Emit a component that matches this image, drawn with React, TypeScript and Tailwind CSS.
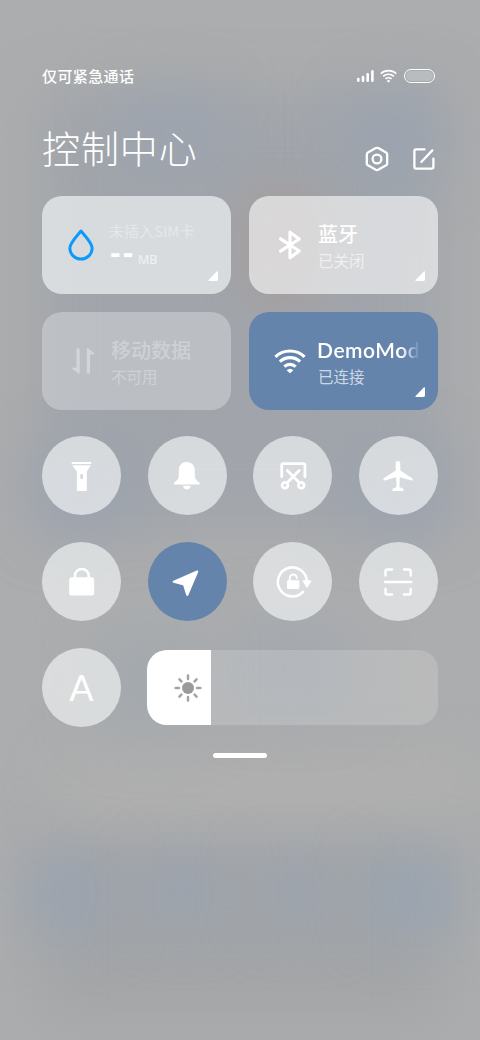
import type { ReactNode } from "react";

const tiles = [
  { id: "torch", icon: <TorchIcon /> },
  { id: "bell", icon: <BellIcon /> },
  { id: "screenshot", icon: <ScreenshotIcon /> },
  { id: "airplane", icon: <AirplaneIcon /> },
  { id: "lock", icon: <LockIcon /> },
  { id: "location", icon: <LocationIcon />, active: true },
  { id: "rotation", icon: <RotationIcon /> },
  { id: "scan", icon: <ScanIcon /> },
];

// All round toggles share the same 40px canvas
function Glyph({ children }: { children: ReactNode }) {
  return (
    <svg viewBox="0 0 40 40" className="h-10 w-10 overflow-visible" fill="none" strokeLinecap="round" strokeLinejoin="round">
      {children}
    </svg>
  );
}

function TorchIcon() {
  return (
    <Glyph>
      <rect x="9.5" y="6" width="20" height="2" rx="0.9" fill="#fff" />
      <path d="M10.2 9.2H28.8L24.8 15.6V34Q24.8 35 23.8 35H15.8Q14.8 35 14.8 34V15.6Z" fill="#fff" />
      <rect x="18.4" y="18" width="2.6" height="5" rx="1.2" fill="#d3d6da" />
    </Glyph>
  );
}

function BellIcon() {
  return (
    <Glyph>
      <path d="M19.6 6C15.1 6 11.8 9.3 11.8 14V19.5C11.8 22.5 10.4 24.2 7.4 26.4C6.3 27.3 6.6 28.4 7.8 28.4H31.8C33 28.4 33.3 27.3 32.2 26.4C29.2 24.2 27.8 22.5 27.8 19.5V14C27.8 9.3 24.3 6 19.6 6Z" fill="#fff" />
      <path d="M15.9 29.8H23.9C23.3 32.2 21.9 33.6 19.9 33.6S16.5 32.2 15.9 29.8Z" fill="#fff" />
    </Glyph>
  );
}

function ScreenshotIcon() {
  return (
    <Glyph>
      <g stroke="#fff" strokeWidth="2.8">
        <path d="M8.7 20.7V9.2Q8.7 7.6 10.3 7.6H30.3Q31.9 7.6 31.9 9.2V20.7" />
        <path d="M14.3 14.6L26.3 26.8M26.2 14.6L14.2 26.8" />
        <circle cx="12" cy="29.3" r="2.9" />
        <circle cx="28.3" cy="29.3" r="2.9" />
      </g>
    </Glyph>
  );
}

function AirplaneIcon() {
  return (
    <Glyph>
      <path
        d="M20 5C18.6 5 17.7 5.9 17.7 7.4V14.6L6.2 22C5.5 22.5 5.3 23 5.3 23.7C5.3 24.5 5.8 24.7 6.5 24.5L18.2 21.2L18.6 31L15.2 32.4C14.5 32.7 14.3 33.2 14.3 34C14.3 34.6 14.6 35 15.2 35H24.8C25.4 35 25.7 34.6 25.7 34C25.7 33.2 25.5 32.7 24.8 32.4L21.4 31L21.8 21.2L33.5 24.5C34.2 24.7 34.7 24.5 34.7 23.7C34.7 23 34.5 22.5 33.8 22L22.3 14.6V7.4C22.3 5.9 21.4 5 20 5Z"
        fill="#fff"
      />
    </Glyph>
  );
}

function LockIcon() {
  return (
    <Glyph>
      <path d="M13 16V13.6A6.8 6.6 0 0 1 26.7 13.6V16" stroke="#fff" strokeWidth="2.6" />
      <rect x="7.2" y="15.2" width="25" height="18.4" rx="2.6" fill="#fff" />
    </Glyph>
  );
}

function LocationIcon() {
  return (
    <Glyph>
      <path d="M30.2 9.6L6.8 19.7L17 22.5L20.3 32.8Z" fill="#fff" stroke="#fff" strokeWidth="2.2" />
    </Glyph>
  );
}

function RotationIcon() {
  return (
    <Glyph>
      <path d="M33.8 18.6A14.5 14.5 0 1 0 30 29.8" stroke="#fff" strokeWidth="2.6" />
      <path d="M30.5 19L37.6 19L34 24.8Z" fill="#fff" stroke="#fff" strokeWidth="1.6" />
      <path d="M16.8 18.5V16A3.5 3.5 0 0 1 23.8 16" stroke="#fff" strokeWidth="1.9" />
      <rect x="14" y="18.3" width="12.4" height="8.7" rx="1.3" fill="#fff" />
    </Glyph>
  );
}

function ScanIcon() {
  return (
    <Glyph>
      <path
        d="M7.5 13.6V9.6Q7.5 7.5 9.6 7.5H14M26 7.5H30.6Q32.7 7.5 32.7 9.6V13.6M7.5 26.6V30.4Q7.5 32.5 9.6 32.5H14M26 32.5H30.6Q32.7 32.5 32.7 30.4V26.6M7 20H33.2"
        stroke="#fff"
        strokeWidth="2.4"
      />
    </Glyph>
  );
}

function WifiIcon({ className }: { className: string }) {
  return (
    <svg viewBox="0 0 32 26" className={className} fill="none" stroke="#fff" strokeWidth="3.1">
      <path d="M1.4 8.8A21.2 21.2 0 0 1 30.6 8.8M5.9 13.7A14.6 14.6 0 0 1 26.1 13.7M10.3 18.6A8.4 8.4 0 0 1 21.7 18.6" />
      <path d="M16 25.2L12.6 22.2Q16 19.2 19.4 22.2Z" fill="#fff" stroke="none" />
    </svg>
  );
}

function Corner() {
  return (
    <svg viewBox="0 0 10 10" className="absolute right-[13px] bottom-[13px] h-2.5 w-2.5" fill="#fff">
      <path d="M8.7 0.5Q10 -0.3 10 1.2V8.6Q10 10 8.6 10H1.1Q-0.4 10 0.6 8.9Z" />
    </svg>
  );
}

function Card({ className, icon, children }: { className: string; icon: ReactNode; children: ReactNode }) {
  return (
    <div className={`relative flex h-[98px] rounded-[20px] ${className}`}>
      <div className="flex w-[69px] shrink-0 items-center justify-end">{icon}</div>
      <div className="min-w-0 flex-1">{children}</div>
    </div>
  );
}

// Blurred home screen behind the panel
function Wallpaper() {
  return (
    <div className="absolute inset-0 overflow-hidden bg-[#acadae]">
      <div className="absolute top-[90px] left-[40px] h-[440px] w-[400px] bg-[#a1a5ab] blur-[28px]" />
      <div className="absolute top-[840px] left-[40px] h-[180px] w-[400px] bg-[#a3a5a7] blur-[30px]" />
      <div className="absolute top-[765px] left-[60px] h-[50px] w-[420px] bg-[#b1b1b0] blur-[28px]" />
      <div className="absolute top-[90px] left-[120px] h-[80px] w-[100px] bg-[#99a3b0]/65 blur-[28px]" />
      <div className="absolute top-[90px] left-[350px] h-[95px] w-[90px] bg-[#99a3b0]/70 blur-[28px]" />
      <div className="absolute top-[195px] left-[250px] h-[100px] w-[65px] bg-[#ab9893]/80 blur-[20px]" />
      <div className="absolute top-[445px] left-[35px] h-[85px] w-[95px] bg-[#98a2b0]/75 blur-[28px]" />
      <div className="absolute top-[445px] left-[355px] h-[85px] w-[95px] bg-[#98a2b0]/75 blur-[28px]" />
      <div className="absolute top-[625px] left-[230px] h-[85px] w-[120px] bg-[#9fa7b0]/70 blur-[30px]" />
      <div className="absolute top-[630px] left-[100px] h-[100px] w-[90px] bg-[#a0a7ae]/80 blur-[30px]" />
      <div className="absolute top-[855px] left-[25px] h-[80px] w-[85px] bg-[#98a3b2]/80 blur-[26px]" />
      <div className="absolute top-[855px] left-[140px] h-[75px] w-[85px] bg-[#99a3b1]/70 blur-[26px]" />
      <div className="absolute top-[855px] left-[255px] h-[75px] w-[85px] bg-[#9aa3b0]/65 blur-[26px]" />
      <div className="absolute top-[855px] left-[368px] h-[80px] w-[88px] bg-[#98a3b2]/85 blur-[26px]" />
    </div>
  );
}

function StatusBar() {
  return (
    <div className="flex h-5 items-center justify-between">
      <span className="text-[15px] leading-5 font-medium tracking-[0.4px]">仅可紧急通话</span>
      <div className="flex items-center pr-[3px]">
        <svg viewBox="0 0 17 12" className="mr-[6px] h-3 w-[17px]" fill="#fff">
          <rect x="0" y="7.8" width="2.6" height="4.2" rx="1.2" />
          <rect x="4.7" y="5.8" width="2.6" height="6.2" rx="1.2" />
          <rect x="9.4" y="3" width="2.6" height="9" rx="1.2" />
          <rect x="14.1" y="0" width="2.6" height="12" rx="1.2" />
        </svg>
        <WifiIcon className="mr-[7px] h-[14px] w-[17px]" />
        <div className="h-[14px] w-[31px] rounded-full border-[1.5px] border-white p-px">
          <div className="h-full rounded-full bg-[#b9bcbe]" />
        </div>
      </div>
    </div>
  );
}

function Header() {
  return (
    <div className="mt-[32px] flex h-[60px] items-start justify-between">
      <h1 className="text-[38px] leading-[58px] font-light tracking-[0.9px]">控制中心</h1>
      <div className="flex gap-[24px] pt-[28px] pr-[3px]">
        <svg viewBox="0 0 24 26" className="h-[26px] w-6" fill="none" stroke="#fff" strokeWidth="2.3" strokeLinejoin="round">
          <path d="M10.8 2.1Q12 1.5 13.2 2.1L21.1 6.5Q22.2 7.2 22.2 8.4V17.4Q22.2 18.6 21.1 19.3L13.2 23.8Q12 24.4 10.8 23.8L2.9 19.3Q1.8 18.6 1.8 17.4V8.4Q1.8 7.2 2.9 6.5Z" />
          <circle cx="12" cy="13" r="4.4" />
        </svg>
        <svg viewBox="0 0 22 26" className="h-[26px] w-[22px]" fill="none" stroke="#fff" strokeWidth="2.3" strokeLinecap="round" strokeLinejoin="round">
          <path d="M11.5 3.4H3Q1.4 3.4 1.4 5V21Q1.4 22.6 3 22.6H18.8Q20.4 22.6 20.4 21V12.6M8.3 16L19.3 4.4" />
        </svg>
      </div>
    </div>
  );
}

function BrightnessSlider({ value }: { value: number }) {
  return (
    <div className="ml-[26px] h-[75px] flex-1 overflow-hidden rounded-[20px] bg-white/17">
      <div className="flex h-full items-center bg-white pl-[27px]" style={{ width: `${value}%` }}>
        <svg viewBox="0 0 28 28" className="h-7 w-7 shrink-0" fill="none" stroke="#a3a3a3" strokeWidth="2.5" strokeLinecap="round">
          <circle cx="14" cy="14" r="6" fill="#9b9b9b" stroke="none" />
          <path d="M14 1.6V4.9M14 23.1V26.4M1.6 14H4.9M23.1 14H26.4M5.4 5.4L7.4 7.4M20.6 20.6L22.6 22.6M5.4 22.6L7.4 20.6M20.6 7.4L22.6 5.4" />
        </svg>
      </div>
    </div>
  );
}

export default function App() {
  return (
    <div className='relative h-[1040px] w-[480px] overflow-hidden font-["Noto_Sans_CJK_SC",sans-serif] text-white'>
      <Wallpaper />

      <div className="relative px-[42px] pt-[66px]">
        <StatusBar />
        <Header />

        {/* Large cards */}
        <div className="mt-[18px] grid grid-cols-2 gap-[18px]">
          <Card
            className="bg-[#e9ebed]/77"
            icon={
              <svg viewBox="0 0 28 34" className="mr-4 h-[34px] w-7" fill="none" stroke="#0d99fb" strokeWidth="3" strokeLinejoin="round">
                <path d="M14 3C10.3 7.5 2.8 15.2 2.8 20.2A11.2 10.9 0 0 0 25.2 20.2C25.2 15.2 17.7 7.5 14 3Z" />
              </svg>
            }
          >
            <div className="-ml-0.5 pt-[23px] text-[15px] leading-6 whitespace-nowrap text-white/35">未插入SIM卡</div>
            <div className="flex h-6 items-center">
              <span className='-mt-[7px] -ml-px w-7 font-["Liberation_Sans",sans-serif] text-[32px] leading-6 font-bold tracking-[2px] whitespace-nowrap'>--</span>
              <span className='mt-[9px] font-["Noto_Sans",sans-serif] text-[12.5px] leading-5 text-white/65'>MB</span>
            </div>
            <Corner />
          </Card>

          <Card
            className="bg-[#e9e9ea]/77"
            icon={
              <svg viewBox="0 0 24 32" className="mr-[16px] h-8 w-6" fill="none" stroke="#fff" strokeWidth="3.2" strokeLinecap="round" strokeLinejoin="round">
                <path d="M2.6 9.8L21.2 22L12 28.8V3.2L21.2 10L2.6 22.2" />
              </svg>
            }
          >
            <div className="pt-[24px] text-[20px] leading-7 font-medium">蓝牙</div>
            <div className="text-[15.5px] leading-6 text-white/60">已关闭</div>
            <Corner />
          </Card>

          <Card
            className="bg-[#e0e3e6]/42"
            icon={
              <svg viewBox="0 0 24 28" className="mr-[16px] h-7 w-6 opacity-35" fill="#fff">
                <path d="M5.5 1.5H8.7V26.4Q8.7 27.5 7.7 26.8L1 21.6Q0.6 20.8 1.4 20.7H5.5Z" />
                <path d="M19 26.6H15.8V1.6Q15.8 0.4 16.8 1.1L23.4 6.4Q23.8 7.2 23 7.3H19Z" />
              </svg>
            }
          >
            <div className="pt-[24px] text-[20px] leading-7 font-medium text-white/30">移动数据</div>
            <div className="text-[15.5px] leading-6 text-white/30">不可用</div>
          </Card>

          <Card className="bg-[#6484ac]" icon={<WifiIcon className="mr-3 h-[26px] w-8" />}>
            <div className="-ml-px w-fit mask-r-from-82% mask-r-to-100% pt-[24px] font-[Lato,sans-serif] text-[21px] leading-7 font-semibold tracking-[0.55px] whitespace-nowrap">
              DemoMod
            </div>
            <div className="text-[15.5px] leading-6 text-white/70">已连接</div>
            <Corner />
          </Card>
        </div>

        {/* Round toggles */}
        <div className="mt-[26px] grid grid-cols-[repeat(4,79px)] justify-between gap-y-[27px]">
          {tiles.map((tile) => (
            <div
              key={tile.id}
              className={`flex h-[79px] items-center justify-center rounded-full ${tile.active ? "bg-[#6484ac]" : "bg-[#e9ebec]/76"}`}
            >
              {tile.icon}
            </div>
          ))}
        </div>

        {/* Auto brightness + slider */}
        <div className="mt-[27px] flex items-center">
          <div className="flex h-[79px] w-[79px] items-center justify-center rounded-full bg-[#e9ebeb]/76 pb-0.5 font-[Lato,sans-serif] text-[36px] leading-none">
            A
          </div>
          <BrightnessSlider value={22} />
        </div>

        <div className="mx-auto mt-[26px] h-[5px] w-[54px] rounded-full bg-white" />
      </div>
    </div>
  );
}
